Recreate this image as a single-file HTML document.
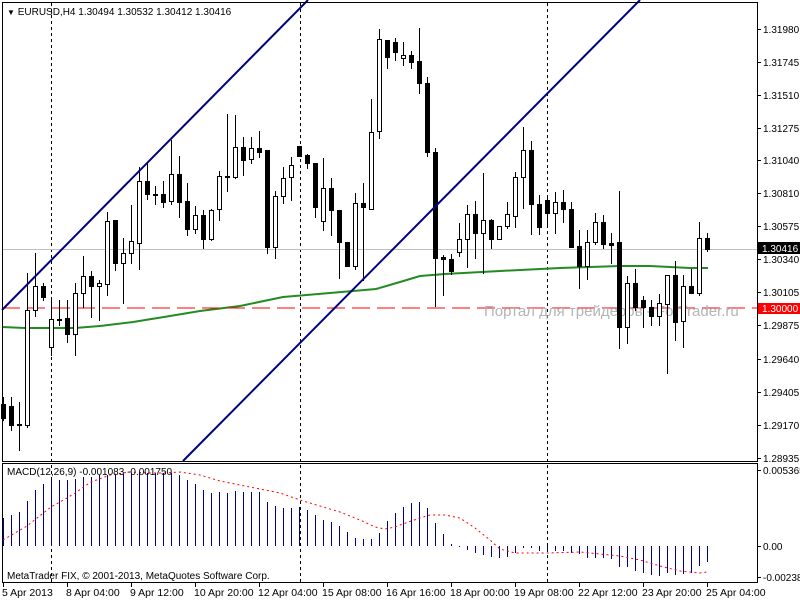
<!DOCTYPE html>
<html><head><meta charset="utf-8"><style>
html,body{margin:0;padding:0;background:#fff;}
svg{display:block;font-family:"Liberation Sans","DejaVu Sans",sans-serif;}
</style></head><body>
<svg id="s" width="800" height="600" viewBox="0 0 800 600" xmlns="http://www.w3.org/2000/svg" shape-rendering="crispEdges">
<rect width="800" height="600" fill="#fff"/>
<g id="grid"></g>
<polyline fill="none" stroke="#228b22" stroke-width="2" shape-rendering="auto" points="2,327 25,328 75,328 100,326 133,322 170,316 200,311 240,306 283,297 330,293 376,289 400,282 420,276 445,274 500,271 560,268 620,266 650,266 690,268 708,268"/>
<line x1="2" y1="249.5" x2="757" y2="249.5" stroke="#c0c0c0"/>
<line x1="2" y1="308" x2="757" y2="308" stroke="#f00" stroke-dasharray="18,7"/>
<text x="484" y="316" font-size="15" fill="#b4b4b4" shape-rendering="auto">Портал для трейдеров - ForTrader.ru</text>
<g id="candles"></g>
<line x1="2" y1="310" x2="308" y2="0" stroke="#000080" stroke-width="2" shape-rendering="auto"/>
<line x1="183" y1="461" x2="640" y2="0" stroke="#000080" stroke-width="2" shape-rendering="auto"/>
<g id="macd"></g>
<polyline fill="none" stroke="#f00" stroke-dasharray="2,3" shape-rendering="auto" points="3,540 27,526 51,507 67,498 75,493 91,482 110,475 130,472 150,473 165,473 180,472 200,475 220,481 240,485 260,489 280,493 300,500 320,506 340,512 360,520 375,527 385,529 395,527 400,525 420,518 430,515 445,515 460,518 475,528 490,540 500,549 515,553 547,553 580,552 600,554 620,556 640,560 660,566 680,571 700,573 707,572"/>
<!-- frames -->
<rect x="2.5" y="2.5" width="755" height="459" fill="none" stroke="#000"/>
<rect x="2.5" y="463.5" width="755" height="119" fill="none" stroke="#000"/>
<g font-size="10" fill="#000">
<text x="7" y="15"><tspan font-size="8">▼</tspan> EURUSD,H4  1.30494 1.30532 1.30412 1.30416</text>
<text x="7" y="475">MACD(12,26,9) -0.001083 -0.001750</text>
<text x="7" y="579">MetaTrader FIX, © 2001-2013, MetaQuotes Software Corp.</text>
</g>
<g id="axis" font-size="10" fill="#000"></g>
<rect x="758" y="242" width="42" height="12" fill="#000"/>
<text x="762" y="252" font-size="10" fill="#fff">1.30416</text>
<rect x="758" y="303" width="42" height="11" fill="#f00"/>
<text x="762" y="312" font-size="10" fill="#fff">1.30000</text>
<g font-size="10.5" fill="#000" id="time">
<text x="2" y="596">5 Apr 2013</text>
<text x="66" y="596">8 Apr 04:00</text>
<text x="130" y="596">9 Apr 12:00</text>
<text x="194" y="596">10 Apr 20:00</text>
<text x="258" y="596">12 Apr 04:00</text>
<text x="322" y="596">15 Apr 08:00</text>
<text x="386" y="596">16 Apr 16:00</text>
<text x="450" y="596">18 Apr 00:00</text>
<text x="514" y="596">19 Apr 08:00</text>
<text x="578" y="596">22 Apr 12:00</text>
<text x="642" y="596">23 Apr 20:00</text>
<text x="706" y="596">25 Apr 04:00</text>
</g>
</svg>
<script>
var NS="http://www.w3.org/2000/svg";
function el(p,t,a){var e=document.createElementNS(NS,t);for(var k in a)e.setAttribute(k,a[k]);document.getElementById(p).appendChild(e);return e;}
// [white?1:0, bodyTop, bodyBottom, high, low]
var C=[[0,404,418,397,420],[0,406,425,397,430],[0,424,425,402,450],[1,310,425,273,427],[1,286,310,253,316],[0,286,297,283,300],[1,319,347,300,355],[0,319,320,300,325],[0,318,334,300,342],[1,293,334,283,355],
[1,276,293,256,307],[0,276,286,271,317],[1,283,286,280,320],[1,221,284,212,295],[0,220,263,220,270],[1,253,263,238,303],[1,241,253,205,263],[1,181,243,167,269],[0,181,194,163,199],[0,194,195,186,204],
[0,194,202,181,207],[1,174,201,140,204],[0,174,202,156,217],[0,201,229,183,235],[1,215,229,206,233],[0,215,239,210,248],[1,210,239,209,240],[1,176,209,171,220],[0,176,177,114,191],[1,147,177,115,178],
[0,147,160,137,175],[1,148,159,137,163],[0,148,152,131,157],[0,150,247,150,253],[1,196,247,191,258],[1,178,196,167,203],[1,165,177,157,200],[0,146,156,146,156],[0,155,163,154,168],[0,163,207,163,217],
[1,188,221,158,230],[0,188,210,178,235],[0,210,242,210,278],[0,242,266,242,266],[1,203,266,193,269],[0,203,207,183,280],[1,132,209,99,209],[1,39,131,29,138],[0,40,57,40,68],[0,42,52,38,60],
[1,55,58,42,65],[0,55,62,51,68],[0,61,83,28,93],[0,83,152,77,156],[0,152,258,148,306],[0,257,259,255,295],[0,259,271,254,274],[1,239,252,223,256],[1,214,239,205,267],[0,214,233,201,258],
[1,220,233,173,273],[0,220,239,219,248],[1,226,239,226,239],[1,214,226,202,228],[1,177,216,172,227],[1,150,177,127,208],[0,150,204,141,234],[0,204,227,195,234],[0,200,213,196,227],[1,202,213,192,233],
[0,202,209,190,222],[0,209,247,202,247],[0,246,266,230,288],[1,242,266,230,279],[1,222,242,213,244],[0,222,244,215,248],[0,243,245,233,263],[0,242,327,191,348],[1,283,327,276,343],[0,283,307,269,310],
[0,300,307,296,327],[0,307,316,300,325],[1,303,316,294,325],[1,275,304,275,373],[0,275,322,261,340],[1,286,321,275,347],[0,286,293,269,293],[1,238,293,222,295],[0,238,249,233,251]];
C.forEach(function(c,k){var x=3+8*k;
 el("candles","line",{x1:x+0.5,y1:c[3],x2:x+0.5,y2:c[4]+1,stroke:"#000"});
 var h=Math.max(c[2]-c[1],1);
 if(c[0]) el("candles","rect",{x:x-1.5,y:c[1]+0.5,width:4,height:h,fill:"#fff",stroke:"#000"});
 else el("candles","rect",{x:x-2,y:c[1],width:5,height:h+1,fill:"#000"});
});
var M=[518,515,512,501,490,484,480,480,480,479,477,477,475,475,474,474,473,473,473,473,473,473,475,480,484,490,493,492,493,491,492,492,492,502,506,508,508,507,510,515,520,522,526,532,538,539,539,533,521,513,
507,503,502,508,523,534,544,547,550,553,555,557,558,557,553,548,548,551,551,551,551,553,554,558,558,558,559,567,567,571,573,575,576,573,575,574,573,566,562];
M.forEach(function(y,k){var x=3+8*k+0.5;el("macd","line",{x1:x,y1:546,x2:x,y2:y,stroke:"#000080"});});
// vertical dotted
[51,300,547].forEach(function(x){el("grid","line",{x1:x+0.5,y1:3,x2:x+0.5,y2:582,stroke:"#000","stroke-dasharray":"3,3"});});
// price axis
var P=[["1.31980",29],["1.31745",62],["1.31510",95],["1.31275",128],["1.31040",160],["1.30810",193],["1.30575",226],["1.30340",259],["1.30105",292],["1.29875",325],["1.29640",359],["1.29405",392],["1.29170",425],["1.28935",458],["0.005365",470],["0.00",546],["-0.002382",577]];
P.forEach(function(p){el("axis","line",{x1:757,y1:p[1]+0.5,x2:761,y2:p[1]+0.5,stroke:"#000"});var t=el("axis","text",{x:763,y:p[1]+4});t.textContent=p[0];});
for(var i=0;i<12;i++){var x=3+64*i+0.5;el("axis","line",{x1:x,y1:582,x2:x,y2:587,stroke:"#000"});}
</script>
</body></html>
